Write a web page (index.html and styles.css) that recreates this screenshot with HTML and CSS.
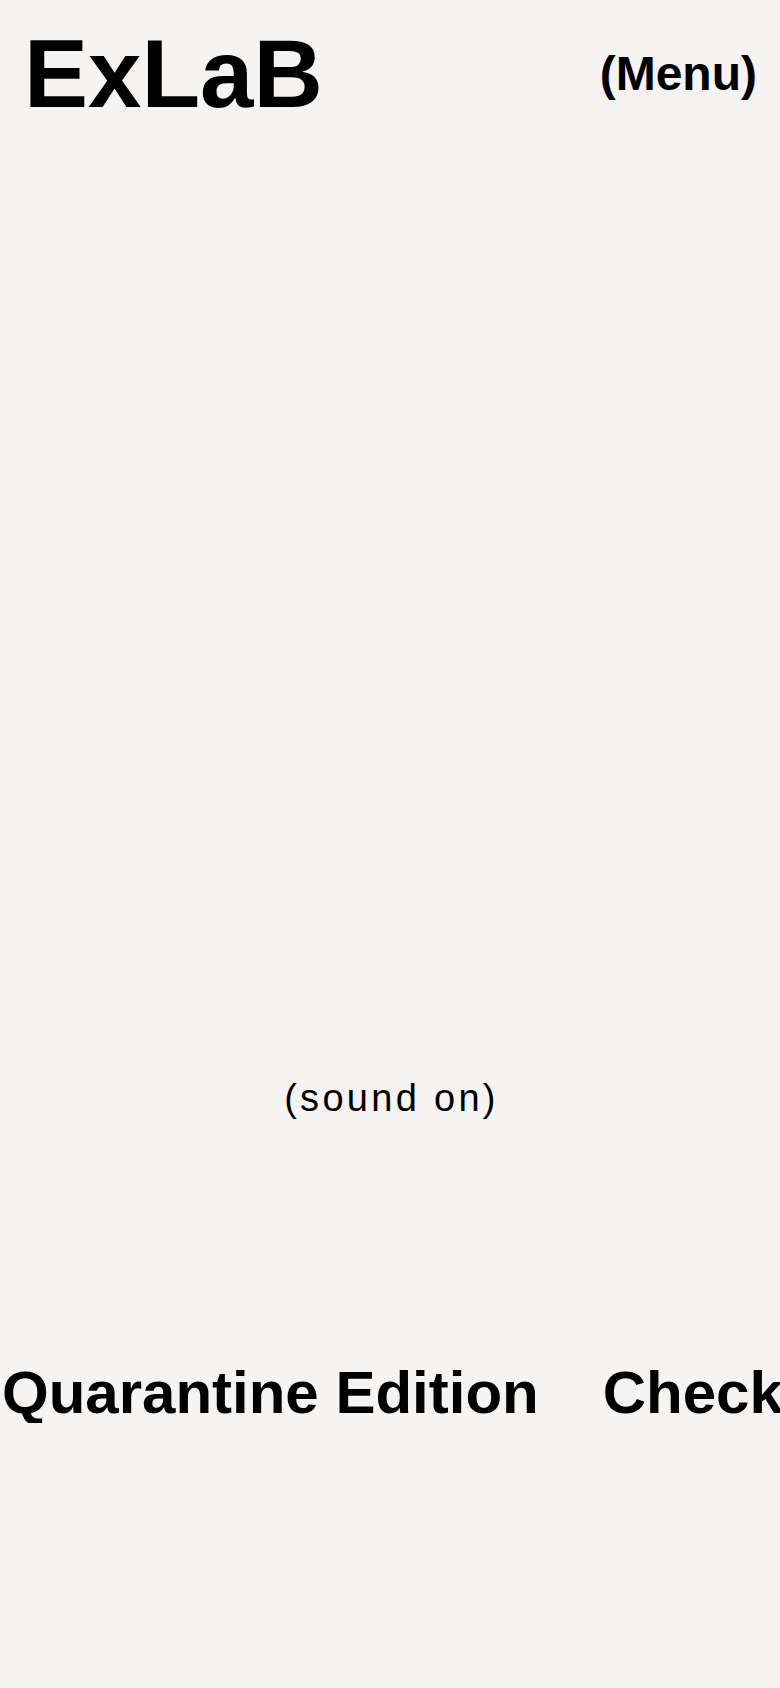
FILE: index.html
```html
<!DOCTYPE html>
<html lang="en">
<head>
<meta charset="utf-8">
<title>ExLaB</title>
<link rel="stylesheet" href="styles.css">
</head>
<body>
<header class="site-header">
  <a class="logo" href="#">ExLaB</a>
  <button class="menu-btn" type="button">(Menu)</button>
</header>
<main>
  <section class="hero">
    <div class="video-stage"></div>
    <p class="sound">(sound on)</p>
  </section>
  <section class="ticker">
    <div class="ticker-track">
      <span class="ticker-item">Quarantine Edition</span>
      <span class="ticker-item">Check it out</span>
    </div>
  </section>
</main>
</body>
</html>
```

FILE: styles.css
```css
html, body {
  margin: 0;
  padding: 0;
  background: #f5f4f2;
  color: #000;
  font-family: "Liberation Sans", Arial, sans-serif;
}

body {
  min-height: 1688px;
  overflow-x: hidden;
}

.site-header {
  display: flex;
  justify-content: space-between;
  align-items: center;
  padding: 26px 23px 0 24px;
}

.logo {
  font-size: 96px;
  font-weight: 700;
  line-height: 1;
  color: #000;
  text-decoration: none;
}

.menu-btn {
  font-family: inherit;
  font-size: 48px;
  font-weight: 700;
  line-height: 1;
  color: #000;
  background: none;
  border: 0;
  padding: 0;
  margin-top: 0;
  cursor: pointer;
}

.hero {
  display: flex;
  flex-direction: column;
  align-items: center;
}

.video-stage {
  width: 100%;
  height: 957px;
}

.sound {
  margin: 0;
  font-size: 38px;
  line-height: 1;
  letter-spacing: 3.3px;
  padding-left: 3px;
  font-weight: 400;
}

.ticker {
  margin-top: 246px;
  overflow: hidden;
  width: 100%;
}

.ticker-track {
  display: flex;
  gap: 64px;
  padding-left: 2px;
  white-space: nowrap;
}

.ticker-item {
  font-size: 60px;
  font-weight: 700;
  line-height: 1;
  flex: none;
}
```
